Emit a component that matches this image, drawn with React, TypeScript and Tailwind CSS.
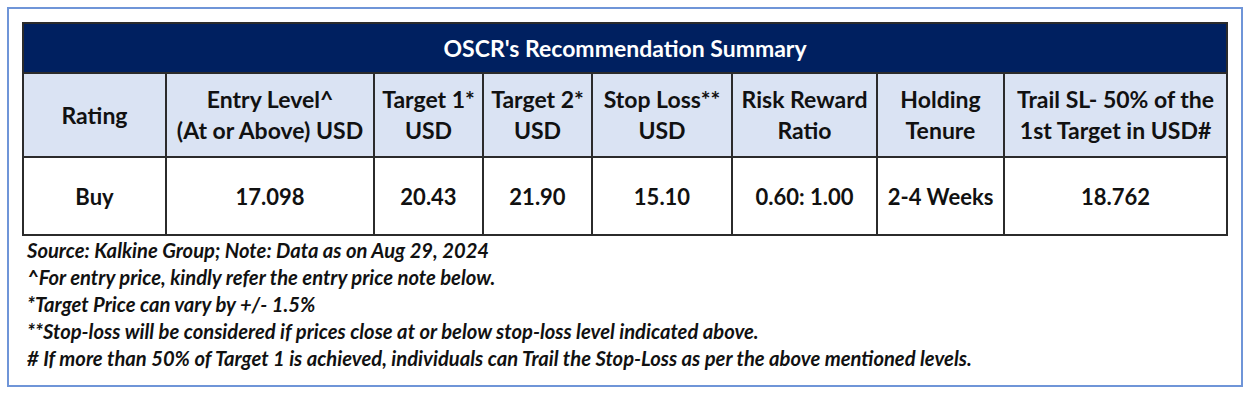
import React from "react";

const cols = [143, 208, 109, 109, 140, 145, 127, 223];

const headers: string[][] = [
  ["Rating"],
  ["Entry Level^", "(At or Above) USD"],
  ["Target 1*", "USD"],
  ["Target 2*", "USD"],
  ["Stop Loss**", "USD"],
  ["Risk Reward", "Ratio"],
  ["Holding", "Tenure"],
  ["Trail SL- 50% of the", "1st Target in USD#"],
];

const values = ["Buy", "17.098", "20.43", "21.90", "15.10", "0.60: 1.00", "2-4 Weeks", "18.762"];

const notes = [
  "Source: Kalkine Group; Note: Data as on Aug 29, 2024",
  "^For entry price, kindly refer the entry price note below.",
  "*Target Price can vary by +/- 1.5%",
  "**Stop-loss will be considered if prices close at or below stop-loss level indicated above.",
  "# If more than 50% of Target 1 is achieved, individuals can Trail the Stop-Loss as per the above mentioned levels.",
];

export default function App() {
  return (
    <div className="w-[1256px] h-[405px] bg-white pt-[7px] pl-[7px]" style={{ fontFamily: "Lato, 'Open Sans', sans-serif" }}>
      <div className="w-[1236px] h-[380px] border-2 border-[#6f95d8] pt-[13px] pl-[13px]">
        <table className="table-fixed border-collapse w-[1204px] text-[#111111]">
          <colgroup>
            {cols.map((w, i) => (
              <col key={i} style={{ width: w }} />
            ))}
          </colgroup>
          <tbody>
            <tr className="h-[50px]">
              <td colSpan={8} className="bg-[#002060] border-2 border-[#2b2b2b] text-center text-white font-bold text-[23px]">
                OSCR's Recommendation Summary
              </td>
            </tr>
            <tr className="h-[84px] bg-[#dae3f3]">
              {headers.map((h, i) => (
                <td key={i} className="border-2 border-[#2b2b2b] text-center font-bold text-[23px] leading-[31px] px-0">
                  {h.map((l, j) => (
                    <div key={j} className="whitespace-nowrap">{l}</div>
                  ))}
                </td>
              ))}
            </tr>
            <tr className="h-[78px] bg-white">
              {values.map((v, i) => (
                <td key={i} className="border-2 border-[#2b2b2b] text-center font-bold text-[22px] whitespace-nowrap">
                  {v}
                </td>
              ))}
            </tr>
          </tbody>
        </table>
        <div className="pl-[5px] pt-[1px] font-bold italic text-[20.2px] leading-[27px] text-[#111111]">
          {notes.map((n, i) => (
            <div key={i} className="whitespace-nowrap">{n}</div>
          ))}
        </div>
      </div>
    </div>
  );
}
